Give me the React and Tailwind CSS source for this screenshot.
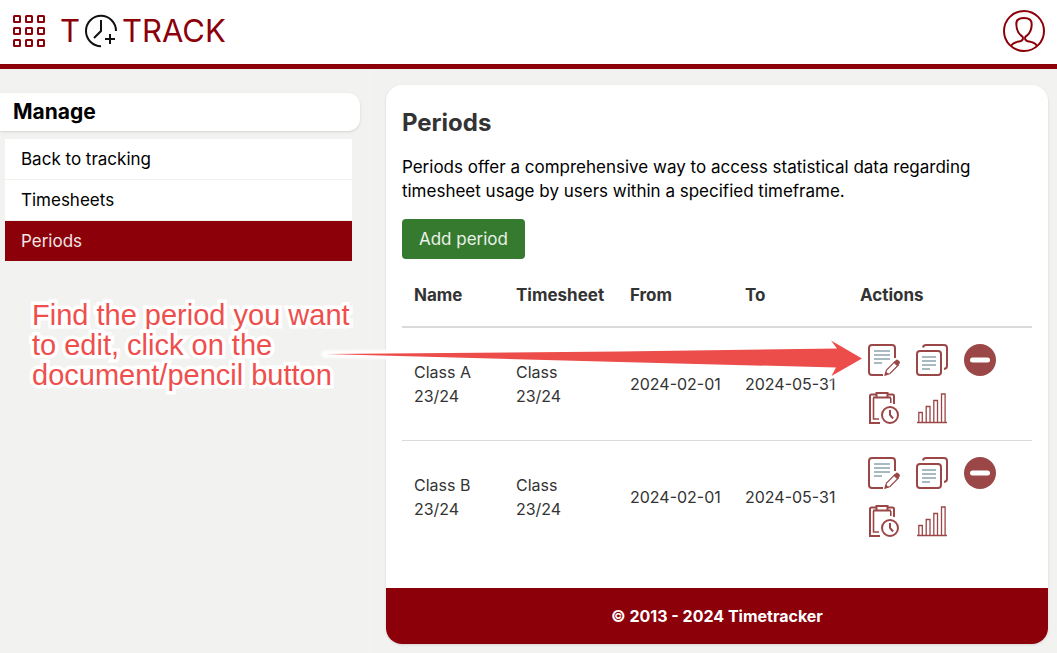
import React from 'react';

const periods = [
    { name: 'Class A 23/24', timesheet: 'Class 23/24', from: '2024-02-01', to: '2024-05-31' },
    { name: 'Class B 23/24', timesheet: 'Class 23/24', from: '2024-02-01', to: '2024-05-31' },
];

const navItems = [
    { label: 'Back to tracking' },
    { label: 'Timesheets' },
    { label: 'Periods', active: true },
];

const GridIcon = () => (
    <svg width="32" height="32" viewBox="0 0 32 32" fill="none" stroke="currentColor" strokeWidth="2">
        {[1, 13, 25].map((y) => [1, 13, 25].map((x) => (
            <rect key={`${x}-${y}`} x={x} y={y} width="6" height="6" rx="0.5" />
        )))}
    </svg>
);

const ClockPlusIcon = () => (
    <svg width="34" height="34" viewBox="0 0 34 34" fill="none" stroke="#111" strokeWidth="2">
        <path d="M32 17A15 15.2 0 1 0 17 32.2" />
        <path d="M17 6v11l-7 7M26 20v10M21 25h10" />
    </svg>
);

const UserIcon = () => (
    <svg width="42" height="42" viewBox="0 0 42 42" fill="none" stroke="currentColor" strokeWidth="2">
        <circle cx="21" cy="21" r="20" />
        <path d="M8 36c1.500-3 5-4 8-4.500 3-.5 4-1.500 4-3.500 0-1.500-1-2-2-2.500-3-2.500-4.700-6-4.700-11.500C13.300 9.500 16 8 21 8s7.700 1.500 7.700 6c0 5.500-1.700 9-4.700 11.500-1 .5-2 1-2 2.500 0 2 1 3 4 3.500 3 .5 6.500 1.500 8 4.500" />
    </svg>
);

const EditIcon = () => (
    <svg width="32" height="32" viewBox="0 0 32 32" fill="none">
        <path d="M15 31H4a3 3 0 0 1-3-3V4a3 3 0 0 1 3-3h20a3 3 0 0 1 3 3v10" stroke="#9b4747" strokeWidth="2" />
        <path d="M6 7h16M6 11h16M6 15h16M6 19h8" stroke="#a9b9c1" strokeWidth="2" />
        <path d="M17 31l1.500-5L27 17.500l3.500 3.500L22 29.500z" stroke="#9b4747" strokeWidth="1.200" />
        <path d="M25.500 18.500l2.500-2.500q1-.8 2 0l1.600 1.600q.8 1 0 2L29 22zM17 31.500l1-4 3 3z" fill="#9b4747" />
    </svg>
);

const CopyIcon = () => (
    <svg width="32" height="32" viewBox="0 0 32 32" fill="none">
        <rect x="1" y="7" width="24" height="24" rx="3" stroke="#9b4747" strokeWidth="2" />
        <path d="M7 3.500Q7.500 1 10 1h18a3 3 0 0 1 3 3v18q0 2.500-3 3" stroke="#9b4747" strokeWidth="2" />
        <path d="M6 13h14M6 17h14M6 21h14M6 25h8" stroke="#a9b9c1" strokeWidth="2" />
    </svg>
);

const RemoveIcon = () => (
    <svg width="32" height="32" viewBox="0 0 32 32">
        <circle cx="16" cy="16" r="16" fill="#9b4747" />
        <rect x="6" y="13.500" width="20" height="5" rx="2.500" fill="#fff" />
    </svg>
);

const ClipboardClockIcon = () => (
    <svg width="32" height="32" viewBox="0 0 32 32" fill="none" stroke="#9b4747" strokeWidth="2">
        <path d="M12 31H2V4q0-1.500 1.500-1.500H8M20 2.500h4.500Q26 2.500 26 4v8" />
        <path d="M11 27H5.500V6M22.800 6v5" strokeWidth="1.600" />
        <path d="M8.500 1h11v4.500h-11zM5 5.500h4M19 5.500h4" />
        <circle cx="22" cy="23" r="8" />
        <path d="M22 18v5l3 3.500" />
    </svg>
);

const ChartIcon = () => (
    <svg width="32" height="32" viewBox="0 0 32 32" fill="none" stroke="#9b4747" strokeWidth="1.300">
        <path d="M1 30.500h30M2.800 30V20.500h3.500V30M10.200 30V14.500h3.800V30M17.800 30V8.500h3.700V30M25.500 30V2h3.600V30" />
    </svg>
);

const actions = [
    { title: 'Edit', Icon: EditIcon },
    { title: 'Copy', Icon: CopyIcon },
    { title: 'Remove', Icon: RemoveIcon },
    { title: 'Assign time', Icon: ClipboardClockIcon },
    { title: 'Statistics', Icon: ChartIcon },
];

const Header = () => (
    <header className="flex h-[69px] items-center justify-between border-b-[5px] border-[#8b0009] bg-white px-3 pb-0.5 text-[#8b0009]">
        <div className="flex items-center gap-3.5">
            <button aria-label="Menu" className="p-px"><GridIcon /></button>
            <a href="#" aria-label="Timetracker" className="flex items-center gap-1 text-[31px] leading-10">
                <span>T</span>
                <ClockPlusIcon />
                <span>TRACK</span>
            </a>
        </div>
        <button aria-label="Profile"><UserIcon /></button>
    </header>
);

const Sidebar = () => (
    <aside className="w-[35%] shrink-0 border-r border-[#f5f5f4] pt-6 pr-[9px]">
        <h2 className="rounded-r-xl bg-white px-[13px] py-[5px] text-[21px] leading-7 font-bold shadow">Manage</h2>
        <nav className="mt-2 mr-2 ml-[5px]">
            {navItems.map((item) => (
                <a
                    key={item.label}
                    href="#"
                    className={`mb-px block px-4 py-2 text-[17px] leading-6 ${item.active ? 'bg-[#8b0009] text-white/90' : 'bg-white text-black'}`}
                >
                    {item.label}
                </a>
            ))}
        </nav>
    </aside>
);

const PeriodsTable = () => (
    <table className="mt-1 w-full table-fixed text-left text-[#333]">
        <thead className="text-[17px] leading-6">
            <tr className="border-b-2 border-[#dadada]">
                <th className="w-[102px] px-3 pt-5 pb-[19px] font-bold">Name</th>
                <th className="w-[114px] px-3 pt-5 pb-[19px] font-bold">Timesheet</th>
                <th className="w-[115px] px-3 pt-5 pb-[19px] font-bold">From</th>
                <th className="w-[115px] px-3 pt-5 pb-[19px] font-bold">To</th>
                <th className="px-3 pt-5 pb-[19px] font-bold">Actions</th>
            </tr>
        </thead>
        <tbody>
            {periods.map((p) => (
                <tr key={p.name} className="border-b border-[#dadada] last:border-b-0">
                    <td className="px-3 py-2">{p.name}</td>
                    <td className="px-3 py-2">{p.timesheet}</td>
                    <td className="px-3 py-2 whitespace-nowrap">{p.from}</td>
                    <td className="px-3 py-2 whitespace-nowrap">{p.to}</td>
                    <td className="px-3 py-2">
                        <div className="flex flex-wrap">
                            {actions.map(({ title, Icon }) => (
                                <button key={title} aria-label={title} className="p-2"><Icon /></button>
                            ))}
                        </div>
                    </td>
                </tr>
            ))}
        </tbody>
    </table>
);

const Callout = () => (
    <>
        <p className="pointer-events-none absolute top-[300px] left-8 font-['Liberation_Sans',sans-serif] text-[29px] leading-[30px] whitespace-nowrap text-[#ee4f4d] [-webkit-text-stroke:7px_white] [paint-order:stroke_fill]">
            Find the period you want
            <br />
            to edit, click on the
            <br />
            document/pencil button
        </p>
        <svg className="pointer-events-none absolute top-[330px] left-[320px]" width="550" height="56" viewBox="0 0 550 56">
            <defs>
                <filter id="soft" x="-5%" y="-30%" width="110%" height="160%">
                    <feGaussianBlur stdDeviation="1" />
                </filter>
            </defs>
            <path d="M5 24L300 21.500L517 18.500L511 10.500L542 28.500L511.500 46L516 37.500L300 32Z" fill="#fff" stroke="#fff" strokeWidth="7" strokeLinejoin="round" filter="url(#soft)" />
            <path d="M5 24L300 21.500L517 18.500L511 10.500L542 28.500L511.500 46L516 37.500L300 32Z" fill="#ec4c4a" />
        </svg>
    </>
);

const App = () => (
    <div className="relative min-h-screen bg-[#f2f2f0] font-['Inter',sans-serif] text-base text-black">
        <Header />
        <div className="flex">
            <Sidebar />
            <main className="min-w-0 flex-1 pt-4 pr-[9px] pb-[9px] pl-4">
                <div className="overflow-hidden rounded-2xl bg-white shadow">
                    <section className="px-4 pt-5 pb-[35px]">
                        <h1 className="text-2xl leading-9 font-bold text-[#333]">Periods</h1>
                        <p className="mt-[14px] pr-6 text-[17px] leading-6">
                            Periods offer a comprehensive way to access statistical data regarding timesheet usage by users within a specified timeframe.
                        </p>
                        <button className="mt-4 h-10 rounded bg-[#357a2e] px-[17px] text-[17px] leading-6 text-white/90">Add period</button>
                        <PeriodsTable />
                    </section>
                    <footer className="bg-[#8b0009] py-4 text-center leading-6 font-bold text-white">
                        © 2013 - 2024 Timetracker
                    </footer>
                </div>
            </main>
        </div>
        <Callout />
    </div>
);

export default App;
